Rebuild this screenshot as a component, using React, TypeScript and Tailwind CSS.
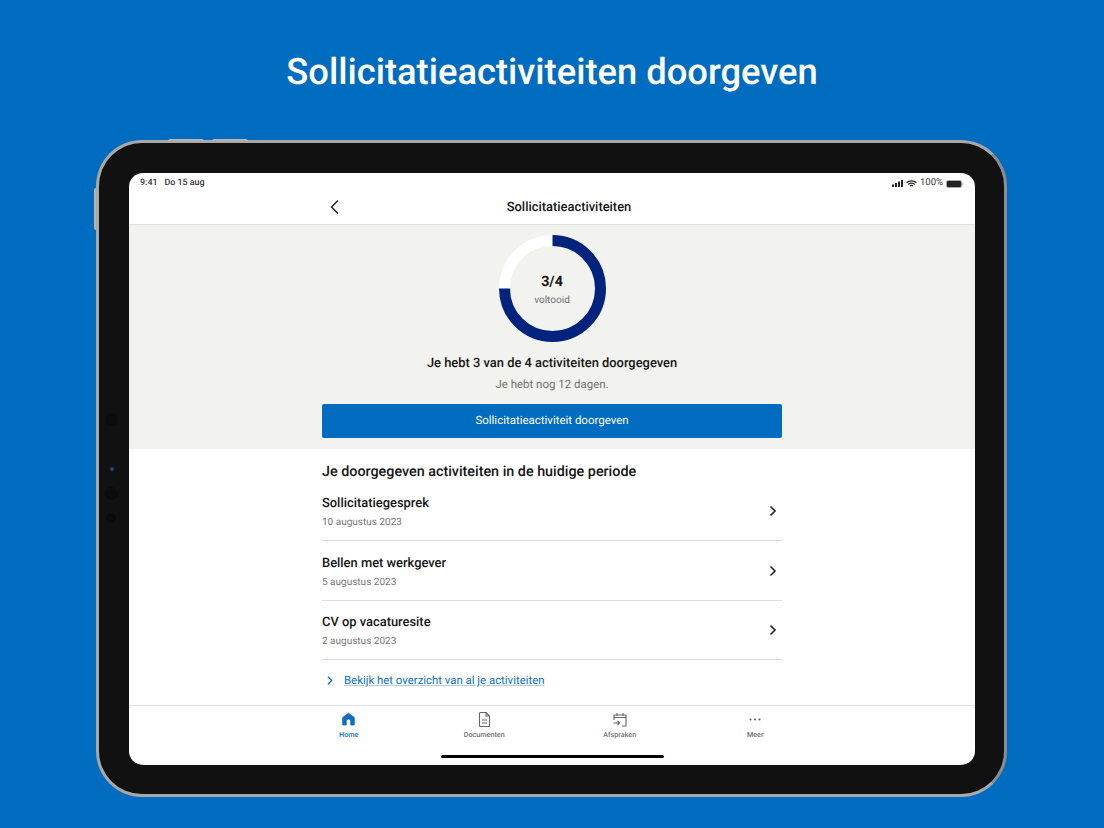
import React from "react";

const Row = ({ title, date }: { title: string; date: string }) => (
  <div className="flex h-[59.5px] items-center justify-between border-b border-[#dcdcdc] pr-[4px]">
    <div className="flex flex-col pt-[5px]">
      <span className="text-[12.9px] leading-[18px] font-medium text-[#151515]">{title}</span>
      <span className="mt-[2px] text-[10px] leading-[16px] text-[#777777]">{date}</span>
    </div>
    <svg className="mt-[1px]" width="10" height="12" viewBox="0 0 10 12" fill="none" stroke="#222" strokeWidth="1.6">
      <path d="M2.5 1.5 7 6l-4.5 4.5" />
    </svg>
  </div>
);

const Tab = ({ label, active, children }: { label: string; active?: boolean; children: React.ReactNode }) => (
  <div className="flex w-[135.5px] flex-col items-center">
    <div className="flex h-[16px] items-center justify-center">{children}</div>
    <span className={active ? "mt-[3px] text-[7.2px] leading-[10px] font-medium text-[#0f6fc0]" : "mt-[3px] text-[7.2px] leading-[10px] font-medium text-[#707070]"}>{label}</span>
  </div>
);

export default function App() {
  return (
    <div className="flex h-[828px] w-[1104px] flex-col overflow-hidden bg-[#006cbf] font-['Roboto',sans-serif] [text-rendering:geometricPrecision]">
      <h1 className="mt-[49px] text-center text-[36.35px] leading-[46px] font-medium text-white">Sollicitatieactiviteiten doorgeven</h1>
      <div className="relative mt-[45px] ml-[96px] h-[657px] w-[911px] rounded-[46px] border-[3px] border-[#a8a8a8] border-r-[#8c8c8c] bg-[#111111] px-[30px] py-[30px]">
        <div className="absolute top-[-4px] left-[69px] h-[2px] w-[36px] rounded-t-sm bg-[#b4b4b4]" />
        <div className="absolute top-[-4px] left-[113px] h-[2px] w-[36px] rounded-t-sm bg-[#b4b4b4]" />
        <div className="absolute top-[45px] left-[-5px] h-[42px] w-[2px] rounded-l-sm bg-[#b4b4b4]" />
        <div className="absolute top-[270px] left-[6px] h-[13px] w-[13px] rounded-full bg-[#0c0c0c]" />
        <div className="absolute top-[324px] left-[11px] h-[4px] w-[4px] rounded-full bg-[#1e4a8a]" />
        <div className="absolute top-[344px] left-[6px] h-[13px] w-[13px] rounded-full bg-[#0c0c0c]" />
        <div className="absolute top-[370px] left-[7px] h-[10px] w-[10px] rounded-full bg-[#0c0c0c]" />

        <div className="flex h-[592px] w-[846px] flex-col overflow-hidden rounded-[14px] bg-white">
          <div className="flex h-[19px] shrink-0 items-center justify-between pt-[2px] pr-[11px] pl-[11px] text-[9.5px] text-[#333]">
            <span className="flex gap-[7px] text-[8.9px] font-medium"><span>9:41</span><span>Do 15 aug</span></span>
            <span className="flex items-center gap-[3px]">
              <svg width="11" height="7" viewBox="0 0 11 7" fill="#222">
                <rect x="0" y="4.5" width="2" height="2.5" />
                <rect x="3" y="3" width="2" height="4" />
                <rect x="6" y="1.5" width="2" height="5.5" />
                <rect x="9" y="0" width="2" height="7" />
              </svg>
              <svg width="11" height="8" viewBox="0 0 11 8" fill="none" stroke="#222" strokeWidth="1.2">
                <path d="M.6 2.8a7 7 0 0 1 9.8 0M2.2 4.5a4.6 4.6 0 0 1 6.600 0M3.900 6a2.200 2.200 0 0 1 3.200 0" />
              </svg>
              <span>100%</span>
              <svg width="18" height="8" viewBox="0 0 18 8">
                <rect x=".5" y=".5" width="15" height="7" rx="1.6" fill="#222" stroke="#aaa" />
                <rect x="16.2" y="2.8" width="1" height="2.4" fill="#aaa" />
              </svg>
            </span>
          </div>

          <div className="flex h-[33px] shrink-0 items-center justify-center border-b border-[#e2e2e2]">
            <div className="relative flex w-[460px] justify-center pl-[34px]">
              <svg className="absolute top-[-1px] left-[7px]" width="12" height="16" viewBox="0 0 12 16" fill="none" stroke="#222" strokeWidth="1.5">
                <path d="M9 1.5 2.5 8 9 14.5" />
              </svg>
              <span className="text-[12.9px] leading-[16px] font-medium text-[#151515]">Sollicitatieactiviteiten</span>
            </div>
          </div>

          <div className="flex h-[224px] shrink-0 flex-col items-center bg-[#f2f2ee] pt-[10px]">
            <div className="relative h-[107px] w-[107px]">
              <svg width="107" height="107" viewBox="0 0 107 107" fill="none" strokeWidth="11">
                <circle cx="53.5" cy="53.5" r="48" stroke="#ffffff" />
                <path d="M53.5 5.5A48 48 0 1 1 5.5 53.5" stroke="#00237d" />
              </svg>
              <div className="absolute inset-0 flex flex-col items-center pt-[39px]">
                <span className="text-[14.3px] leading-[17px] font-bold text-[#151515]">3/4</span>
                <span className="mt-[2px] text-[10px] leading-[15px] text-[#707070]">voltooid</span>
              </div>
            </div>
            <p className="mt-[14px] text-[12.9px] leading-[16px] font-medium text-[#151515]">Je hebt 3 van de 4 activiteiten doorgegeven</p>
            <p className="mt-[4px] text-[11.47px] leading-[16px] text-[#707070]">Je hebt nog 12 dagen.</p>
            <div className="mt-[12px] flex h-[34px] w-[460px] items-center justify-center rounded-[2px] bg-[#006cbf] text-[11.47px] text-white">
              Sollicitatieactiviteit doorgeven
            </div>
          </div>

          <div className="flex flex-1 flex-col items-center">
            <div className="flex w-[460px] flex-col">
              <h2 className="mt-[14px] text-[14.34px] leading-[18px] font-medium text-[#151515]">Je doorgegeven activiteiten in de huidige periode</h2>
              <div className="mt-[0.5px]">
                <Row title="Sollicitatiegesprek" date="10 augustus 2023" />
                <Row title="Bellen met werkgever" date="5 augustus 2023" />
                <Row title="CV op vacaturesite" date="2 augustus 2023" />
              </div>
              <div className="mt-[12px] flex items-center pl-[5px]">
                <svg width="6" height="9" viewBox="0 0 6 9" fill="none" stroke="#0f6fc0" strokeWidth="1.3">
                  <path d="M1 .8 4.700 4.500 1 8.200" />
                </svg>
                <span className="ml-[11px] text-[11.4px] leading-[16px] text-[#0f6fc0] underline decoration-[#a9cdea]">Bekijk het overzicht van al je activiteiten</span>
              </div>
            </div>
          </div>

          <div className="flex h-[60px] shrink-0 flex-col items-center border-t border-[#e2e2e2]">
            <div className="mt-[5px] flex">
              <Tab label="Home" active>
                <svg width="13" height="14" viewBox="0 0 13 14" fill="#0f6fc0" stroke="#0f6fc0" strokeWidth="0.8" strokeLinejoin="round">
                  <path d="M6.500 1.200 12.300 5.500V13H8.700V9.200a2.200 2.200 0 0 0-4.400 0V13H.7V5.500Z" />
                </svg>
              </Tab>
              <Tab label="Documenten">
                <svg width="13" height="15" viewBox="0 0 13 15" fill="none" stroke="#666" strokeWidth="1.1">
                  <path d="M1.500 1.500a1 1 0 0 1 1-1h5.500l3.500 3.500v9.500a1 1 0 0 1-1 1h-8a1 1 0 0 1-1-1ZM8 .5V4h3.500M4 8h5M4 11h5" />
                </svg>
              </Tab>
              <Tab label="Afspraken">
                <svg width="14" height="15" viewBox="0 0 14 15" fill="none" stroke="#666" strokeWidth="1.1">
                  <path d="M1 8V3h12v11H9M1 5.500h12M4 1v3M10 1v3M.5 11h6M4.500 9l2 2-2 2" />
                </svg>
              </Tab>
              <Tab label="Meer">
                <svg width="12" height="3" viewBox="0 0 12 3" fill="#555">
                  <circle cx="1.500" cy="1.500" r="1" />
                  <circle cx="6" cy="1.500" r="1" />
                  <circle cx="10.500" cy="1.500" r="1" />
                </svg>
              </Tab>
            </div>
            <div className="mt-[15px] h-[3px] w-[223px] rounded-full bg-black" />
          </div>
        </div>
      </div>
    </div>
  );
}
